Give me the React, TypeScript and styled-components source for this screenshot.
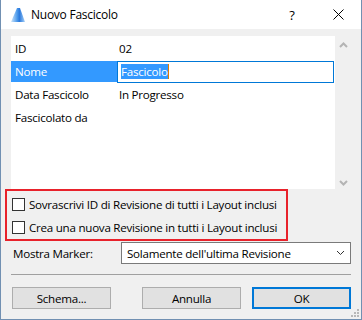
import React from "react";
import styled, { createGlobalStyle } from "styled-components";

const Global = createGlobalStyle`
  html, body { margin: 0; padding: 0; background: #ffffff; }
  body { font-family: "Open Sans", "Noto Sans", sans-serif; font-size: 11.6px; letter-spacing: -0.25px; color: #000; white-space: nowrap; }
  * { box-sizing: border-box; }
`;

const Window = styled.div`
  width: 362px;
  height: 320px;
  border: 1px solid #7190b2;
  border-top: none;
  background: #f0f0f0;
  display: flex;
  flex-direction: column;
  position: relative;
`;

const TitleBar = styled.div`
  height: 29px;
  background: #ffffff;
  display: flex;
  align-items: center;
  padding-left: 9px;
`;

const TitleText = styled.span`
  margin-left: 5px;
  font-size: 12px;
  flex: 1;
`;

const TitleButton = styled.div`
  width: 46px;
  height: 29px;
  display: flex;
  align-items: center;
  justify-content: center;
  font-size: 13px;
`;

const Body = styled.div`
  flex: 1;
  padding: 7px 10px 0 10px;
  display: flex;
  flex-direction: column;
`;

const ListWrap = styled.div`
  display: flex;
  height: 153px;
`;

const List = styled.div`
  width: 324px;
  background: #ffffff;
  padding-top: 1px;
`;

const Row = styled.div`
  height: 23px;
  display: flex;
  align-items: center;
`;

const Label = styled.div<{ $selected?: boolean }>`
  width: 106px;
  height: 21px;
  padding-left: 4px;
  display: flex;
  align-items: center;
  background: ${(p) => (p.$selected ? "#3399ff" : "transparent")};
  color: ${(p) => (p.$selected ? "#ffffff" : "#000")};
`;

const Value = styled.div`
  padding-left: 2px;
`;

const Input = styled.div`
  width: 217px;
  height: 22px;
  border: 1px solid #0078d7;
  display: flex;
  align-items: center;
  padding-left: 3px;
`;

const Selected = styled.span`
  background: #3399ff;
  color: #ffffff;
  line-height: 15px;
`;

const Caret = styled.span`
  display: inline-block;
  width: 1px;
  height: 15px;
  background: #e07b00;
`;

const ScrollCol = styled.div`
  width: 16px;
  display: flex;
  flex-direction: column;
  justify-content: space-between;
  align-items: center;
  padding: 6px 0 3px 0;
`;

const RedBox = styled.div`
  margin-left: -6px;
  width: 283px;
  height: 52px;
  border: 2px solid #e8222b;
  padding: 2px 0 0 5px;
`;

const CheckRow = styled.div`
  height: 23px;
  display: flex;
  align-items: center;
`;

const Box = styled.div`
  width: 13px;
  height: 13px;
  border: 1px solid #333333;
  background: #ffffff;
  margin-right: 4px;
  flex: none;
`;

const MarkerRow = styled.div`
  margin-top: 1px;
  display: flex;
  align-items: center;
  height: 22px;
`;

const MarkerLabel = styled.div`
  width: 110px;
  padding-left: 2px;
`;

const Select = styled.div`
  width: 230px;
  height: 22px;
  border: 1px solid #7a7a7a;
  background: #ffffff;
  display: flex;
  align-items: center;
  justify-content: space-between;
  padding: 0 5px 0 5px;
`;

const Separator = styled.div`
  margin-top: 10px;
  height: 1px;
  background: #a0a0a0;
`;

const Footer = styled.div`
  margin-top: 12px;
  display: flex;
  padding-left: 1px;
`;

const Button = styled.div<{ $default?: boolean }>`
  width: 99px;
  height: 22px;
  background: #e1e1e1;
  border: ${(p) => (p.$default ? "2px solid #0078d7" : "1px solid #adadad")};
  display: flex;
  align-items: center;
  justify-content: center;
  margin-left: ${(p) => (p.$default ? "11px" : "0")};
`;

const Spacer = styled.div`
  flex: 1;
`;

const Grip = styled.svg`
  position: absolute;
  right: 2px;
  bottom: 2px;
`;

const AppIcon = () => (
  <svg width="16" height="16" viewBox="0 0 16 16">
    <defs>
      <linearGradient id="g" x1="0" x2="1" y1="0" y2="0">
        <stop offset="0" stopColor="#cfe6fb" />
        <stop offset="0.45" stopColor="#4a98ea" />
        <stop offset="0.6" stopColor="#2a78dc" />
        <stop offset="1" stopColor="#a8d2f8" />
      </linearGradient>
    </defs>
    <polygon points="1,15 7,1 10,1 15,15" fill="url(#g)" />
  </svg>
);

const Chevron = ({ up, color, thin }: { up?: boolean; color: string; thin?: boolean }) => (
  <svg width="9" height="6" viewBox="0 0 9 6">
    <polyline
      points={up ? "1,5 4.5,1.5 8,5" : "1,1 4.5,4.5 8,1"}
      fill="none"
      stroke={color}
      strokeWidth={thin ? 1 : 2}
    />
  </svg>
);

export default function App() {
  return (
    <>
      <Global />
      <Window>
        <TitleBar>
          <AppIcon />
          <TitleText>Nuovo Fascicolo</TitleText>
          <TitleButton>?</TitleButton>
          <TitleButton>
            <svg width="11" height="11" viewBox="0 0 11 11">
              <path d="M0.5 0.5 L10.5 10.5 M10.5 0.5 L0.5 10.5" stroke="#000" strokeWidth="1" />
            </svg>
          </TitleButton>
        </TitleBar>
        <Body>
          <ListWrap>
            <List>
              <Row>
                <Label>ID</Label>
                <Value>02</Value>
              </Row>
              <Row>
                <Label $selected>Nome</Label>
                <Input>
                  <Selected>Fascicolo</Selected>
                  <Caret />
                </Input>
              </Row>
              <Row>
                <Label>Data Fascicolo</Label>
                <Value>In Progresso</Value>
              </Row>
              <Row>
                <Label>Fascicolato da</Label>
              </Row>
            </List>
            <ScrollCol>
              <Chevron up color="#b4b4b4" />
              <Chevron color="#b4b4b4" />
            </ScrollCol>
          </ListWrap>
          <RedBox>
            <CheckRow>
              <Box />
              Sovrascrivi ID di Revisione di tutti i Layout inclusi
            </CheckRow>
            <CheckRow>
              <Box />
              Crea una nuova Revisione in tutti i Layout inclusi
            </CheckRow>
          </RedBox>
          <MarkerRow>
            <MarkerLabel>Mostra Marker:</MarkerLabel>
            <Select>
              <span>Solamente dell'ultima Revisione</span>
              <Chevron color="#333" thin />
            </Select>
          </MarkerRow>
          <Separator />
          <Footer>
            <Button>Schema...</Button>
            <Spacer />
            <Button>Annulla</Button>
            <Button $default>OK</Button>
          </Footer>
        </Body>
        <Grip width="9" height="9" viewBox="0 0 9 9">
          <rect x="7" y="1" width="2" height="2" fill="#b8b8b8" />
          <rect x="4" y="4" width="2" height="2" fill="#b8b8b8" />
          <rect x="7" y="4" width="2" height="2" fill="#b8b8b8" />
          <rect x="1" y="7" width="2" height="2" fill="#b8b8b8" />
          <rect x="4" y="7" width="2" height="2" fill="#b8b8b8" />
          <rect x="7" y="7" width="2" height="2" fill="#b8b8b8" />
        </Grip>
      </Window>
    </>
  );
}
